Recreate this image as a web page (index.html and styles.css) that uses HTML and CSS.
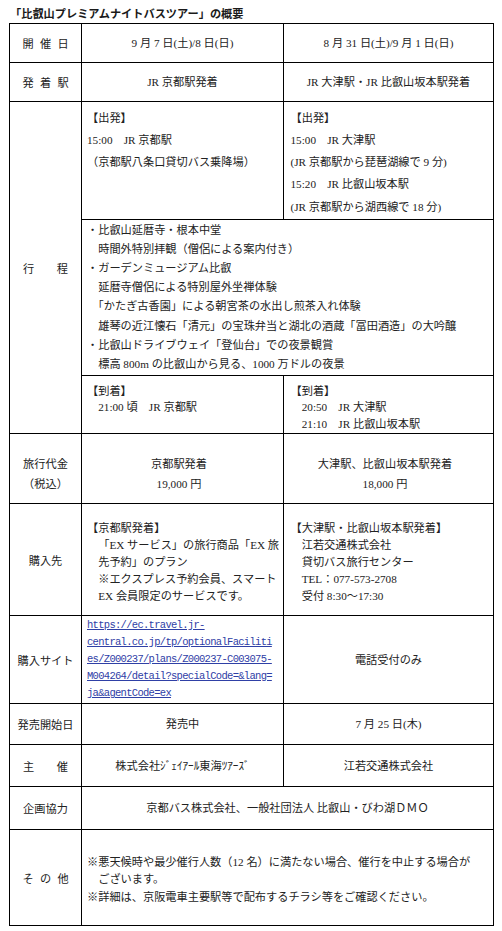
FILE: index.html
```html
<!DOCTYPE html>
<html lang="ja">
<head>
<meta charset="utf-8">
<title>比叡山プレミアムナイトバスツアーの概要</title>
<link rel="stylesheet" href="styles.css">
</head>
<body>
<div class="page">
  <h1 class="title">「比叡山プレミアムナイトバスツアー」の概要</h1>
  <table class="outline">
    <colgroup><col class="col-label"><col class="col-a"><col class="col-b"></colgroup>
    <tbody>
      <tr class="row-date">
        <th class="label"><span class="spread">開催日</span></th>
        <td class="center">9 月 7 日(土)/8 日(日)</td>
        <td class="center">8 月 31 日(土)/9 月 1 日(日)</td>
      </tr>
      <tr class="row-station">
        <th class="label"><span class="spread">発着駅</span></th>
        <td class="center">JR 京都駅発着</td>
        <td class="center">JR 大津駅・JR 比叡山坂本駅発着</td>
      </tr>
      <tr class="row-depart">
        <th class="label" rowspan="3">行　　程</th>
        <td class="depart">【出発】<br>15:00　JR 京都駅<br>（京都駅八条口貸切バス乗降場）</td>
        <td class="depart col-right">【出発】<br>15:00　JR 大津駅<br>(JR 京都駅から琵琶湖線で 9 分)<br>15:20　JR 比叡山坂本駅<br>(JR 京都駅から湖西線で 18 分)</td>
      </tr>
      <tr class="row-itin">
        <td class="itin" colspan="2">・比叡山延暦寺・根本中堂<br>　時間外特別拝観（僧侶による案内付き）<br>・ガーデンミュージアム比叡<br>　延暦寺僧侶による特別屋外坐禅体験<br>　「かたぎ古香園」による朝宮茶の水出し煎茶入れ体験<br>　雄琴の近江懐石「清元」の宝珠弁当と湖北の酒蔵「冨田酒造」の大吟醸<br>・比叡山ドライブウェイ「登仙台」での夜景観賞<br>　標高 800m の比叡山から見る、1000 万ドルの夜景</td>
      </tr>
      <tr class="row-arrive">
        <td class="arrive">【到着】<br>　21:00 頃　JR 京都駅</td>
        <td class="arrive col-right">【到着】<br>　20:50　JR 大津駅<br>　21:10　JR 比叡山坂本駅</td>
      </tr>
      <tr class="row-price">
        <th class="label label-price">旅行代金<br>（税込）</th>
        <td class="price">京都駅発着<br>19,000 円</td>
        <td class="price">大津駅、比叡山坂本駅発着<br>18,000 円</td>
      </tr>
      <tr class="row-buy">
        <th class="label label-buy">購入先</th>
        <td class="buy">【京都駅発着】<br><span class="indent">「EX サービス」の旅行商品「EX 旅<br>先予約」のプラン<br>※エクスプレス予約会員、スマート<br>EX 会員限定のサービスです。</span></td>
        <td class="buy col-right">【大津駅・比叡山坂本駅発着】<br><span class="indent">江若交通株式会社<br>貸切バス旅行センター<br>TEL：077-573-2708<br>受付 8:30～17:30</span></td>
      </tr>
      <tr class="row-site">
        <th class="label">購入サイト</th>
        <td class="site"><a class="url" href="https://ec.travel.jr-central.co.jp/tp/optionalFacilities/Z000237/plans/Z000237-C003075-M004264/detail?specialCode=&amp;lang=ja&amp;agentCode=ex">https://ec.travel.jr-<br>central.co.jp/tp/optionalFaciliti<br>es/Z000237/plans/Z000237-C003075-<br>M004264/detail?specialCode=&amp;lang=<br>ja&amp;agentCode=ex</a></td>
        <td class="center">電話受付のみ</td>
      </tr>
      <tr class="row-sale">
        <th class="label">発売開始日</th>
        <td class="center">発売中</td>
        <td class="center">7 月 25 日(木)</td>
      </tr>
      <tr class="row-host">
        <th class="label">主　　催</th>
        <td class="center">株式会社ｼﾞｪｲｱｰﾙ東海ﾂｱｰｽﾞ</td>
        <td class="center">江若交通株式会社</td>
      </tr>
      <tr class="row-coop">
        <th class="label label-low">企画協力</th>
        <td class="center center-low" colspan="2">京都バス株式会社、一般社団法人 比叡山・びわ湖ＤＭＯ</td>
      </tr>
      <tr class="row-other">
        <th class="label label-low"><span class="spread">その他</span></th>
        <td class="other" colspan="2">※悪天候時や最少催行人数（12 名）に満たない場合、催行を中止する場合が<br>　ございます。<br>※詳細は、京阪電車主要駅等で配布するチラシ等をご確認ください。</td>
      </tr>
    </tbody>
  </table>
</div>
</body>
</html>
```
FILE: styles.css
```css
* {
  box-sizing: border-box;
}

body {
  margin: 0;
  background: #ffffff;
  color: #222222;
  font-family: "Liberation Serif", "Noto Sans CJK JP", sans-serif;
  font-size: 11.2px;
}

.page {
  padding: 5px 0 0 9px;
}

.title {
  margin: 0 0 2px 1px;
  font-family: "Noto Sans CJK JP", sans-serif;
  font-size: 11.2px;
  font-weight: bold;
  line-height: 16px;
  color: #1a1a1a;
}

.outline {
  border-collapse: collapse;
  table-layout: fixed;
  width: 484px;
}

.col-label { width: 72px; }
.col-a { width: 202px; }
.col-b { width: 210px; }

.outline th,
.outline td {
  border: 1px solid #000000;
  padding: 0;
  white-space: nowrap;
  font-weight: normal;
  line-height: 16px;
  overflow: hidden;
}

.row-date { height: 39px; }
.row-station { height: 39px; }
.row-depart { height: 117.5px; }
.row-itin { height: 156.5px; }
.row-arrive { height: 58px; }
.row-price { height: 70px; }
.row-buy { height: 112px; }
.row-site { height: 88px; }
.row-sale { height: 41px; }
.row-host { height: 42px; }
.row-coop { height: 43px; }
.row-other { height: 96px; }

.label {
  text-align: center;
  vertical-align: middle;
  padding-top: 3px;
  font-family: "Noto Sans CJK JP", sans-serif;
}

.spread {
  letter-spacing: 6.3px;
  margin-right: -6.3px;
}

.outline .label-price {
  vertical-align: top;
  padding-top: 20px;
  line-height: 19.5px;
}

.label-buy {
  padding-top: 6px;
}

.label-low {
  padding-top: 5px;
}

.center {
  text-align: center;
  vertical-align: middle;
  padding: 3px 7px 0 0;
}

.center-low {
  padding-top: 5px;
}

.outline .depart {
  vertical-align: top;
  padding: 4.5px 0 0 5px;
  line-height: 22.3px;
}

.outline .col-right {
  padding-left: 6.5px;
}

.outline .itin {
  vertical-align: top;
  padding: 1px 0 0 5px;
  line-height: 19.2px;
}

.outline .arrive {
  vertical-align: top;
  padding-top: 6.5px;
  padding-left: 5px;
  line-height: 16.5px;
}

.outline .arrive.col-right {
  padding-left: 6.5px;
}

.outline .price {
  text-align: center;
  vertical-align: top;
  padding: 20px 7px 0 0;
  line-height: 20px;
}

.outline .buy {
  vertical-align: top;
  padding-top: 16px;
  padding-left: 5px;
  line-height: 17.1px;
}

.outline .buy.col-right {
  padding-left: 6.5px;
}

.indent {
  display: block;
  padding-left: 11.2px;
}

.outline .site {
  vertical-align: top;
  padding: 1px 0 0 5px;
  line-height: 17px;
}

.url {
  display: block;
  font-family: "Liberation Mono", monospace;
  font-size: 10.5px;
  line-height: 17px;
  letter-spacing: -0.7px;
  color: #2f40a6;
  text-decoration: underline;
}

.outline .other {
  vertical-align: middle;
  padding: 5px 0 0 5px;
  line-height: 17.3px;
}
```
